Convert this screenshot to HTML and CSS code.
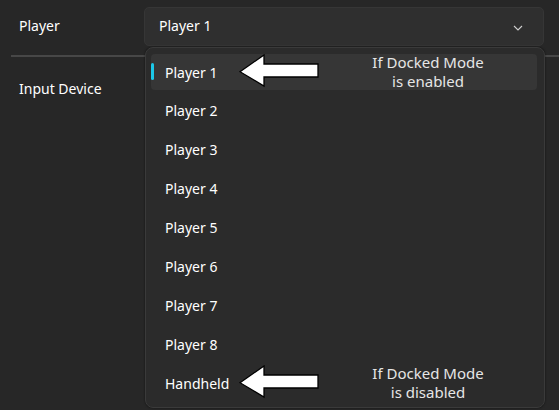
FILE: index.html
```html
<!DOCTYPE html>
<html>
<head>
<meta charset="utf-8">
<link rel="stylesheet" href="styles.css">
</head>
<body>
<div class="page">
  <div class="row row-player">
    <span class="label">Player</span>
    <div class="combo">
      <span class="combo-value">Player 1</span>
      <svg class="chevron" width="10" height="6" viewBox="0 0 10 6"><path d="M1 1 L5 5 L9 1" fill="none" stroke="#cfcfcf" stroke-width="1.1"/></svg>
    </div>
  </div>
  <div class="divider"></div>
  <div class="row row-input">
    <span class="label">Input Device</span>
  </div>

  <div class="popup">
    <div class="item selected">
      <span>Player 1</span>
      <svg class="arrow" width="82" height="34" viewBox="0 0 82 34"><path d="M1 17.7 L25 1 L25 10 L79 10 L79 23 L25 23 L25 32 Z" fill="#fff" stroke="#000" stroke-width="1.3" stroke-linejoin="miter"/></svg>
      <div class="note">If Docked Mode<br>is enabled</div>
    </div>
    <div class="item"><span>Player 2</span></div>
    <div class="item"><span>Player 3</span></div>
    <div class="item"><span>Player 4</span></div>
    <div class="item"><span>Player 5</span></div>
    <div class="item"><span>Player 6</span></div>
    <div class="item"><span>Player 7</span></div>
    <div class="item"><span>Player 8</span></div>
    <div class="item">
      <span>Handheld</span>
      <svg class="arrow" width="82" height="34" viewBox="0 0 82 34"><path d="M1 17.7 L25 1 L25 10 L79 10 L79 23 L25 23 L25 32 Z" fill="#fff" stroke="#000" stroke-width="1.3" stroke-linejoin="miter"/></svg>
      <div class="note">If Docked Mode<br>is disabled</div>
    </div>
  </div>
</div>
</body>
</html>
```

FILE: styles.css
```css
html, body {
  margin: 0;
  padding: 0;
  background: #272727;
}
body {
  font-family: "Noto Sans", "Open Sans", sans-serif;
  font-size: 14px;
  color: #ffffff;
  width: 559px;
  height: 410px;
  overflow: hidden;
}
.page {
  position: relative;
  width: 559px;
  height: 410px;
}
.row {
  display: flex;
  align-items: center;
  padding-left: 19px;
}
.row-player {
  height: 51px;
}
.label {
  width: 125px;
  flex: none;
}
.combo {
  box-sizing: border-box;
  width: 400px;
  height: 39px;
  margin-top: 1px;
  background: #2f2f2f;
  border: 1px solid #363636;
  border-radius: 5px;
  display: flex;
  align-items: center;
  justify-content: space-between;
  padding: 0 20px 0 14px;
}
.combo-value {
  margin-top: -2px;
}
.chevron {
  margin-top: 3px;
}
.divider {
  margin: 4px 0 0 11px;
  height: 2px;
  background: #474747;
}
.row-input {
  height: 62px;
}
.popup {
  position: absolute;
  left: 145px;
  top: 47px;
  width: 400px;
  height: 361px;
  box-sizing: border-box;
  background: #2b2b2b;
  border: 1px solid #3a3a3a;
  border-radius: 8px;
  padding: 6px 7px 6px 5px;
  display: flex;
  flex-direction: column;
  gap: 2.875px;
  box-shadow: 0 0 2px rgba(0, 0, 0, 0.6);
}
.item {
  position: relative;
  height: 36px;
  flex: none;
  display: flex;
  align-items: center;
  padding-left: 14px;
  border-radius: 4px;
}
.item.selected {
  background: #363636;
}
.item.selected::before {
  content: "";
  position: absolute;
  left: 0;
  top: 9px;
  width: 3px;
  height: 17px;
  border-radius: 2px;
  background: #1cc8e8;
}
.arrow {
  position: absolute;
  left: 88px;
  top: 0;
}
.note {
  position: absolute;
  left: 198px;
  width: 158px;
  top: -1px;
  text-align: center;
  font-size: 15px;
  line-height: 19px;
  color: #e6e6e6;
}
```
